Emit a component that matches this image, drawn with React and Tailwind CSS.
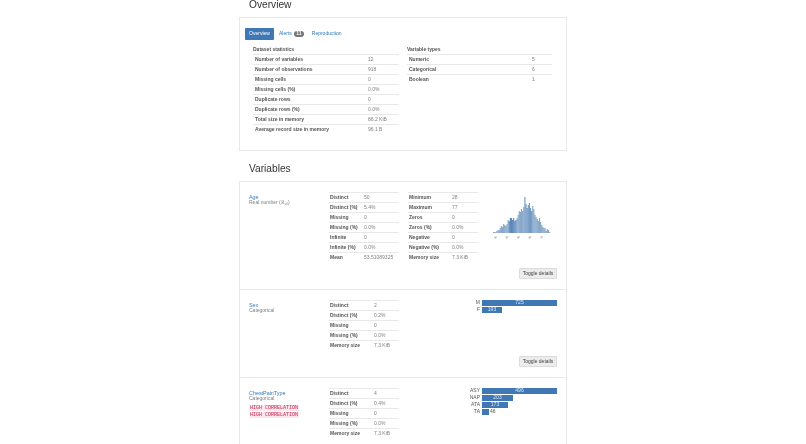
import React from "react";

const datasetStats = [
  ["Number of variables", "12"],
  ["Number of observations", "918"],
  ["Missing cells", "0"],
  ["Missing cells (%)", "0.0%"],
  ["Duplicate rows", "0"],
  ["Duplicate rows (%)", "0.0%"],
  ["Total size in memory", "86.2 KiB"],
  ["Average record size in memory", "96.1 B"],
];

const variableTypes = [
  ["Numeric", "5"],
  ["Categorical", "6"],
  ["Boolean", "1"],
];

const ageLeft = [
  ["Distinct", "50"],
  ["Distinct (%)", "5.4%"],
  ["Missing", "0"],
  ["Missing (%)", "0.0%"],
  ["Infinite", "0"],
  ["Infinite (%)", "0.0%"],
  ["Mean", "53.51089325"],
];

const ageRight = [
  ["Minimum", "28"],
  ["Maximum", "77"],
  ["Zeros", "0"],
  ["Zeros (%)", "0.0%"],
  ["Negative", "0"],
  ["Negative (%)", "0.0%"],
  ["Memory size", "7.3 KiB"],
];

const sexStats = [
  ["Distinct", "2"],
  ["Distinct (%)", "0.2%"],
  ["Missing", "0"],
  ["Missing (%)", "0.0%"],
  ["Memory size", "7.3 KiB"],
];

const chestStats = [
  ["Distinct", "4"],
  ["Distinct (%)", "0.4%"],
  ["Missing", "0"],
  ["Missing (%)", "0.0%"],
  ["Memory size", "7.3 KiB"],
];

const sexBars = [
  { label: "M", value: 725, width: 75 },
  { label: "F", value: 193, width: 20 },
];

const chestBars = [
  { label: "ASY", value: 496, width: 75 },
  { label: "NAP", value: 203, width: 31 },
  { label: "ATA", value: 173, width: 26 },
  { label: "TA", value: 46, width: 7, outside: true },
];

const histogram = [
  1, 1, 1, 2, 3, 3, 5, 7, 6, 9, 8, 7, 9, 13, 12, 15, 15, 13, 15, 12, 13, 15, 18,
  22, 21, 24, 22, 26, 36, 29, 25, 28, 30, 25, 22, 27, 24, 18, 16, 14, 12, 15,
  11, 8, 6, 5, 5, 2, 4, 3, 1,
];

const StatTable = ({ rows, labelClass, className }) => (
  <div className={className}>
    {rows.map(([label, value]) => (
      <div key={label} className="flex h-[10px] items-center border-t border-[#e8e8e8]">
        <span className={`shrink-0 font-bold text-[#555] ${labelClass}`}>{label}</span>
        <span className="text-[#808080]">{value}</span>
      </div>
    ))}
  </div>
);

const ToggleButton = () => (
  <div className="mt-[6px] flex justify-end pr-[9px]">
    <button className="h-[11px] w-[38px] rounded-[1px] border border-[#dcdcdc] bg-[#ececec] text-[5px] text-[#444]">
      Toggle details
    </button>
  </div>
);

const Bars = ({ items }) => (
  <div className="ml-auto flex flex-col gap-[1px]">
    {items.map((item) => (
      <div key={item.label} className="flex h-[6px] items-center">
        <span className="w-[20px] pr-[2px] text-right text-[#555]">{item.label}</span>
        <div className="flex w-[75px] items-center">
          <div
            className="flex h-[6px] items-center justify-center bg-[#3f78b5] text-[#dce8f3]"
            style={{ width: item.width }}
          >
            {!item.outside && item.value}
          </div>
          {item.outside && <span className="pl-[1px] text-[#555]">{item.value}</span>}
        </div>
      </div>
    ))}
  </div>
);

const AgeHistogram = () => (
  <svg className="ml-[15px] mt-[5px]" width="60" height="46" viewBox="0 0 60 46">
    {histogram.map((h, i) => (
      <rect
        key={i}
        x={i * 1.12}
        y={36 - h}
        width="1.12"
        height={h}
        fill="#3d72ad"
        fillOpacity={i > 13 && i < 21 ? 0.85 : i > 27 && i < 35 ? 0.72 : 0.62}
      />
    ))}
    {["30", "40", "50", "60", "70"].map((tick, i) => (
      <text
        key={tick}
        x={2 + i * 11.5}
        y="42"
        fontSize="2.8"
        fill="#777"
        transform={`rotate(-45 ${2 + i * 11.5} 42)`}
      >
        {tick}
      </text>
    ))}
  </svg>
);

const Correlation = () => (
  <span className="mt-[1px] block h-[6px] w-[49px] bg-[#fae6ec] font-['Liberation_Mono',monospace] text-[5px] leading-[6px] text-[#c7254e]">
    HIGH CORRELATION
  </span>
);

const VariableRow = ({ name, type, tag, first, children }) => (
  <div className={`pb-[10px] pt-[10px] ${first ? "" : "border-t border-[#e8e8e8]"}`}>
    <div className="flex">
      <div className="w-[89px] shrink-0 pl-[9px] pt-[3px]">
        <div className="text-[5.4px] leading-[5px] text-[#337ab7]">{name}</div>
        <div className="leading-[5px] text-[#808080]">{type}</div>
        {tag && (
          <div className="mt-[4px] pl-[1px]">
            <Correlation />
            <Correlation />
          </div>
        )}
      </div>
      {children}
    </div>
    <ToggleButton />
  </div>
);

const App = () => {
  return (
    <div className="h-[444px] w-[806px] overflow-hidden bg-white font-['Liberation_Sans',Arial,sans-serif] text-[5px] blur-[0.4px]">
      <div className="ml-[239px] w-[328px]">
        {/* Overview */}
        <h2 className="h-[17px] pl-[10px] text-[10.2px] leading-[9px] text-[#333]">Overview</h2>
        <div className="h-[134px] border border-[#e8e8e8] px-[5px] pt-[10px]">
          <div className="flex h-[12px] items-center">
            <span className="flex h-[12px] w-[29px] items-center justify-center rounded-[1px] bg-[#3f78b5] text-white">
              Overview
            </span>
            <span className="ml-[5px] text-[#337ab7]">Alerts</span>
            <span className="ml-[2px] flex h-[6px] w-[10px] items-center justify-center rounded-[3px] bg-[#777] font-bold text-white">
              11
            </span>
            <span className="ml-[8px] text-[#337ab7]">Reproduction</span>
          </div>
          <div className="mt-[7px] flex pl-[8px]">
            <div className="w-[146px]">
              <div className="h-[7px] leading-[5px] font-bold text-[#555]">Dataset statistics</div>
              <StatTable rows={datasetStats} labelClass="w-[115px] pl-[2px]" />
            </div>
            <div className="ml-[8px] w-[145px]">
              <div className="h-[7px] leading-[5px] font-bold text-[#555]">Variable types</div>
              <StatTable rows={variableTypes} labelClass="w-[125px] pl-[2px]" />
            </div>
          </div>
        </div>

        {/* Variables */}
        <h2 className="mt-[12px] h-[18px] pl-[10px] text-[10.2px] leading-[12px] text-[#333]">Variables</h2>
        <div className="border border-[#e8e8e8]">
          <VariableRow first name="Age" type={<>Real number (ℝ<sub className="text-[3px]">≥0</sub>)</>}>
            <StatTable rows={ageLeft} labelClass="w-[35px] pl-[1px]" className="w-[70px]" />
            <StatTable rows={ageRight} labelClass="w-[44px] pl-[1px]" className="ml-[9px] w-[70px]" />
            <AgeHistogram />
          </VariableRow>
          <VariableRow name="Sex" type="Categorical">
            <StatTable rows={sexStats} labelClass="w-[45px] pl-[1px]" className="w-[70px]" />
            <div className="flex flex-1 pr-[9px]">
              <Bars items={sexBars} />
            </div>
          </VariableRow>
          <VariableRow name="ChestPainType" type="Categorical" tag>
            <StatTable rows={chestStats} labelClass="w-[45px] pl-[1px]" className="w-[70px]" />
            <div className="flex flex-1 pr-[9px]">
              <Bars items={chestBars} />
            </div>
          </VariableRow>
        </div>
      </div>
    </div>
  );
};

export default App;
